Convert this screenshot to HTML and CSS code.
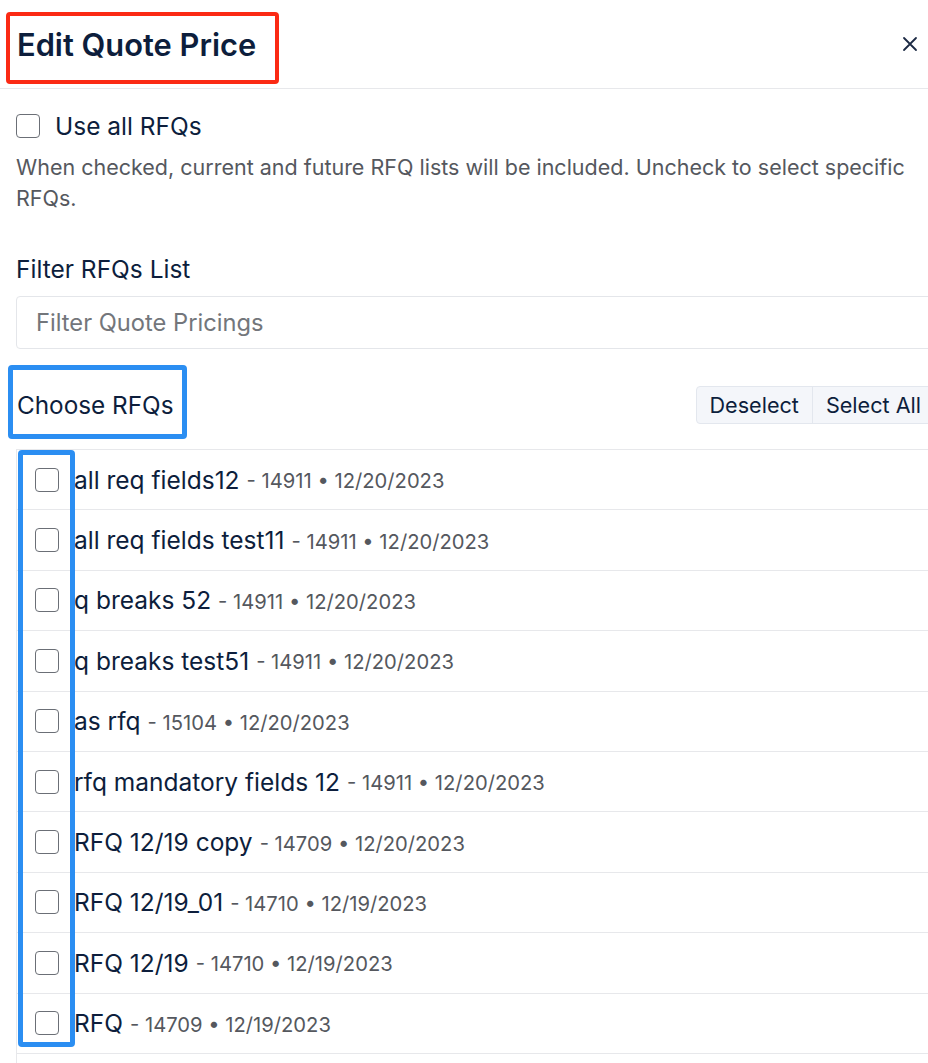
FILE: index.html
```html
<!DOCTYPE html>
<html>
<head>
<meta charset="utf-8">
<link rel="stylesheet" href="styles.css">
</head>
<body>
<div class="modal">
  <div class="header">
    <h1 class="title">Edit Quote Price</h1>
    <button class="close" aria-label="Close">
      <svg width="16" height="16" viewBox="0 0 16 16"><path d="M2 2 L14 14 M14 2 L2 14" stroke="#1c2a44" stroke-width="1.8" stroke-linecap="round"/></svg>
    </button>
  </div>
  <div class="body">
    <label class="use-all"><span class="cb"></span><span class="use-all-text">Use all RFQs</span></label>
    <p class="help">When checked, current and future RFQ lists will be included. Uncheck to select specific RFQs.</p>
    <div class="filter-label">Filter RFQs List</div>
    <div class="filter-input">Filter Quote Pricings</div>
    <div class="choose-row">
      <div class="choose-title">Choose RFQs</div>
      <div class="btn-group">
        <button class="btn">Deselect</button>
        <button class="btn">Select All</button>
      </div>
    </div>
    <div class="list">
      <div class="row"><span class="cb"></span><span class="name">all req fields12</span><span class="meta">- 14911 • 12/20/2023</span></div>
      <div class="row"><span class="cb"></span><span class="name">all req fields test11</span><span class="meta">- 14911 • 12/20/2023</span></div>
      <div class="row"><span class="cb"></span><span class="name">q breaks 52</span><span class="meta">- 14911 • 12/20/2023</span></div>
      <div class="row"><span class="cb"></span><span class="name">q breaks test51</span><span class="meta">- 14911 • 12/20/2023</span></div>
      <div class="row"><span class="cb"></span><span class="name">as rfq</span><span class="meta">- 15104 • 12/20/2023</span></div>
      <div class="row"><span class="cb"></span><span class="name">rfq mandatory fields 12</span><span class="meta">- 14911 • 12/20/2023</span></div>
      <div class="row"><span class="cb"></span><span class="name">RFQ 12/19 copy</span><span class="meta">- 14709 • 12/20/2023</span></div>
      <div class="row"><span class="cb"></span><span class="name">RFQ 12/19_01</span><span class="meta">- 14710 • 12/19/2023</span></div>
      <div class="row"><span class="cb"></span><span class="name">RFQ 12/19</span><span class="meta">- 14710 • 12/19/2023</span></div>
      <div class="row"><span class="cb"></span><span class="name">RFQ</span><span class="meta">- 14709 • 12/19/2023</span></div>
    </div>
  </div>
  <div class="mark mark-red"></div>
  <div class="mark mark-blue-title"></div>
  <div class="mark mark-blue-col"></div>
</div>
</body>
</html>
```

FILE: styles.css
```css
* { box-sizing: border-box; }
html, body { margin: 0; padding: 0; background: #fff; }
body { font-family: Inter, "Noto Sans", sans-serif; color: #0d1e3c; }

.modal {
  position: relative;
  width: 928px;
  height: 1063px;
  overflow: hidden;
  background: #fff;
}

.header {
  height: 89px;
  display: flex;
  align-items: center;
  justify-content: space-between;
  padding: 0 10px 0 17px;
  border-bottom: 1px solid #e7e8eb;
}
.title {
  margin: 0;
  font-size: 30.8px;
  font-weight: 600;
  color: #0d1e3c;
  line-height: 1;
  padding-top: 3px;
}
.close {
  border: 0;
  background: transparent;
  padding: 0;
  width: 16px;
  height: 16px;
  display: flex;
}

.body {
  width: 950px;
  padding: 0 15px 0 16px;
}

.cb {
  display: inline-block;
  flex: none;
  width: 24px;
  height: 24px;
  border: 1.5px solid #6b6f76;
  border-radius: 4px;
  background: #fff;
}

.use-all {
  display: flex;
  align-items: center;
  gap: 15px;
  margin-top: 25px;
  height: 24px;
}
.use-all-text {
  font-size: 24.5px;
  color: #0d1e3c;
}
.help {
  margin: 14px 0 0 0;
  width: 910px;
  font-size: 21.5px;
  line-height: 31px;
  color: #55585e;
}

.filter-label {
  margin-top: 40px;
  font-size: 24.5px;
  line-height: 30px;
  color: #0d1e3c;
}
.filter-input {
  margin-top: 12px;
  height: 53px;
  border: 1px solid #e4e6ea;
  border-radius: 4px;
  padding: 0 19px;
  display: flex;
  align-items: center;
  font-size: 23.7px;
  color: #73767b;
}

.choose-row {
  display: flex;
  align-items: flex-start;
  justify-content: space-between;
  height: 101px;
  border-bottom: 1px solid #e7e8eb;
}
.choose-title {
  font-size: 24.3px;
  line-height: 30px;
  margin-top: 41px;
  color: #0d1e3c;
  padding-left: 1px;
}
.btn-group {
  display: flex;
  height: 38px;
  margin-top: 37px;
  border: 1px solid #e3e7ee;
  border-radius: 4px;
  background: #f4f6fa;
}
.btn {
  border: 0;
  background: transparent;
  font-family: Inter, sans-serif;
  font-size: 21.6px;
  color: #0d1e3c;
  padding: 0 13px;
}
.btn + .btn { border-left: 1px solid #e3e7ee; }

.list {
  border-left: 1px solid #e7e8eb;
  min-height: 700px;
}
.row {
  height: 60.4px;
  border-bottom: 1px solid #e7e8eb;
  display: flex;
  align-items: center;
  padding-left: 18px;
}
.row .cb { margin-right: 15px; }
.name {
  font-size: 24.5px;
  color: #0d1e3c;
}
.meta {
  font-size: 20.2px;
  color: #55585e;
  margin-left: 7px;
  padding-top: 2px;
}

.mark {
  position: absolute;
  border-radius: 4px;
  pointer-events: none;
}
.mark-red {
  left: 6px; top: 12px; width: 273px; height: 72px;
  border: 4px solid #fb2a14;
}
.mark-blue-title {
  left: 8px; top: 365px; width: 179px; height: 74px;
  border: 5px solid #2b8ef2;
}
.mark-blue-col {
  left: 18px; top: 450px; width: 57px; height: 597px;
  border: 5px solid #2b8ef2;
}
```
